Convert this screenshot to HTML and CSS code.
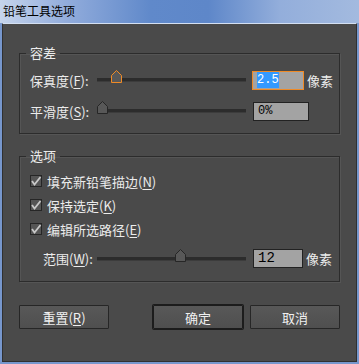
FILE: index.html
```html
<!DOCTYPE html>
<html lang="zh">
<head>
    <meta charset="UTF-8">
    <meta name="viewport" content="width=device-width, initial-scale=1.0">
    <title>铅笔工具选项</title>
    <link rel="stylesheet" href="styles.css">
</head>
<body>

    <div class="titlebar">铅笔工具选项</div>

    <div class="dialog">

        <fieldset class="group tolerance">
            <legend>容差</legend>

            <div class="row">
                <span class="label">保真度(<u>F</u>):</span>
                <div class="track">
                    <svg class="thumb active" style="left: 14px" width="11" height="13" viewBox="0 0 11 13">
                        <polygon points="0.5,5.5 5.5,0.5 10.5,5.5 10.5,12.5 0.5,12.5"/>
                    </svg>
                </div>
                <span class="field active fidelity"><span class="selected">2.5</span></span>
                <span class="unit">像素</span>
            </div>

            <div class="row">
                <span class="label">平滑度(<u>S</u>):</span>
                <div class="track">
                    <svg class="thumb" style="left: 0px" width="11" height="13" viewBox="0 0 11 13">
                        <polygon points="0.5,5.5 5.5,0.5 10.5,5.5 10.5,12.5 0.5,12.5"/>
                    </svg>
                </div>
                <span class="field smooth">0%</span>
            </div>
        </fieldset>

        <fieldset class="group options">
            <legend>选项</legend>

            <label class="check-row">
                <span class="box"><svg width="12" height="12" viewBox="0 0 12 12"><polyline points="2,6 4.5,9.5 10.5,2"/></svg></span>
                <span>填充新铅笔描边(<u>N</u>)</span>
            </label>
            <label class="check-row">
                <span class="box"><svg width="12" height="12" viewBox="0 0 12 12"><polyline points="2,6 4.5,9.5 10.5,2"/></svg></span>
                <span>保持选定(<u>K</u>)</span>
            </label>
            <label class="check-row">
                <span class="box"><svg width="12" height="12" viewBox="0 0 12 12"><polyline points="2,6 4.5,9.5 10.5,2"/></svg></span>
                <span>编辑所选路径(<u>E</u>)</span>
            </label>

            <div class="row range">
                <span class="label">范围(<u>W</u>):</span>
                <div class="track">
                    <svg class="thumb" style="left: 78px" width="11" height="13" viewBox="0 0 11 13">
                        <polygon points="0.5,5.5 5.5,0.5 10.5,5.5 10.5,12.5 0.5,12.5"/>
                    </svg>
                </div>
                <span class="field width">12</span>
                <span class="unit">像素</span>
            </div>
        </fieldset>

        <div class="buttons">
            <button class="reset">重置(<u>R</u>)</button>
            <button class="default">确定</button>
            <button>取消</button>
        </div>

    </div>

</body>
</html>
```

FILE: styles.css
```css
/* Dark dialog colours */
:root {
    --frame: #7797cd;
    --dialog-bg: #4a4a4a;
    --line-dark: #2c2c2c;
    --text: #ececec;
    --field-bg: #a3a3a3;
    --focus: #ef8a26;
    --select: #3399ff;
}

body {
    margin: 0;
    width: 359px;
    height: 364px;
    background: var(--frame);
    font-family: "Noto Sans CJK SC", sans-serif;
    font-size: 13px;
    color: var(--text);
    overflow: hidden;
}

u {
    text-decoration: underline;
    text-underline-offset: 2px;
}

.titlebar {
    height: 23px;
    padding-left: 3px;
    line-height: 22px;
    font-size: 12px;
    color: #000;
    background: linear-gradient(to right, #c6d5ec 0%, #93addc 18%, #6089ca 42%, #5e87c9 58%, #93aedb 78%, #a3badf 100%);
}

.dialog {
    margin: 0 2px 2px 2px;
    padding: 21px 16px 0 16px;
    box-sizing: border-box;
    height: 339px;
    background: var(--dialog-bg);
    border: 1px solid #303030;
    border-top-color: #d4e0f2;
}

.group {
    margin: 0;
    padding: 0 4px 0 10px;
    border: 1px solid var(--line-dark);
    box-shadow: inset 1px 1px 0 #555, 1px 1px 0 #555;
}

.group legend {
    padding: 0 4px;
    margin-left: -4px;
    line-height: 16px;
}

.tolerance {
    padding-top: 9px;
    padding-bottom: 12px;
}

.options {
    margin-top: 14px;
    padding-top: 8px;
    padding-bottom: 13px;
}

.row {
    display: flex;
    align-items: center;
    height: 20px;
}

.row > * {
    flex-shrink: 0;
}

.row + .row {
    margin-top: 11px;
}

.label {
    width: 67px;
    white-space: nowrap;
}

.range {
    height: 19px;
    margin-top: 11px;
}

.range .label {
    padding-left: 13px;
    box-sizing: border-box;
}

.track {
    position: relative;
    width: 149px;
    height: 3px;
    background: #2c2c2c;
    border-bottom: 1px solid #3c3c3c;
}

.thumb {
    position: absolute;
    top: -8px;
}

.thumb polygon {
    fill: #585858;
    stroke: #262626;
}

.thumb.active polygon {
    stroke: var(--focus);
}

.field {
    height: 19px;
    margin-left: 7px;
    padding-left: 4px;
    box-sizing: border-box;
    background: var(--field-bg);
    border: 1px solid #222;
    color: #000;
    font-family: "Liberation Mono", monospace;
    font-size: 12px;
    line-height: 17px;
}

.field.active {
    border-color: var(--focus);
}

.fidelity {
    width: 52px;
    margin-left: 6px;
}

.smooth {
    width: 56px;
}

.width {
    width: 50px;
    font-size: 14px;
}

.selected {
    background: var(--select);
    color: #fff;
    padding: 1px 0;
}

.unit {
    margin-left: 3px;
    white-space: nowrap;
}

.check-row {
    display: flex;
    align-items: center;
    height: 18px;
    gap: 5px;
}

.check-row + .check-row {
    margin-top: 6px;
}

.box {
    width: 12px;
    height: 12px;
    box-sizing: border-box;
    border: 1px solid #262626;
    background: #555;
    position: relative;
}

.box svg {
    position: absolute;
    left: -1px;
    top: -1px;
}

.box polyline {
    fill: none;
    stroke: #c8c8c8;
    stroke-width: 1.8;
}

.buttons {
    display: flex;
    gap: 7px;
    margin-top: 23px;
}

button {
    width: 90px;
    height: 24px;
    padding: 0;
    font-family: inherit;
    font-size: 13px;
    color: #f0f0f0;
    background: linear-gradient(#585858, #4f4f4f);
    border: 1px solid #262626;
    border-radius: 1px;
}

button.reset {
    margin-right: auto;
}

button.default {
    border-color: #1c1c1c;
    box-shadow: 0 0 0 1px #1c1c1c;
}
```
